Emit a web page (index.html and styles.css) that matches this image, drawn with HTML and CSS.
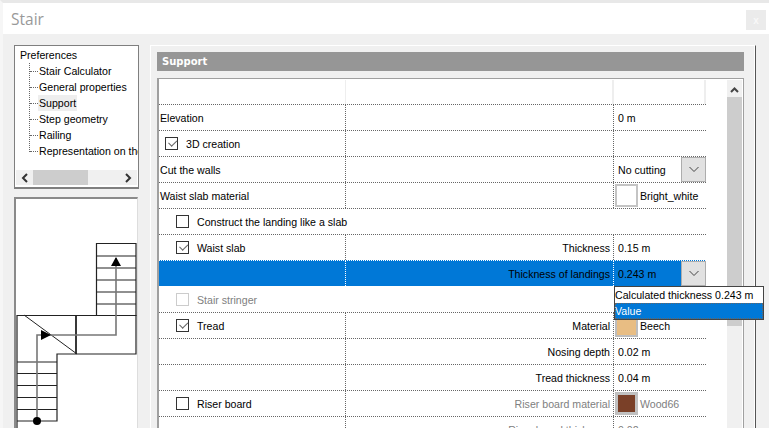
FILE: index.html
```html
<!DOCTYPE html>
<html lang="en">
<head>
<meta charset="utf-8">
<title>Stair</title>
<link rel="stylesheet" href="styles.css">
</head>
<body>
<div class="window">
  <header class="titlebar">
    <h1 class="title">Stair</h1>
    <button class="close">x</button>
  </header>
  <main class="content">
    <aside class="side">
      <nav class="tree">
        <div class="tree-root">Preferences</div>
        <ul class="tree-list">
          <li class="tree-item"><span class="tree-label">Stair Calculator</span></li>
          <li class="tree-item"><span class="tree-label">General properties</span></li>
          <li class="tree-item"><span class="tree-label current">Support</span></li>
          <li class="tree-item"><span class="tree-label">Step geometry</span></li>
          <li class="tree-item"><span class="tree-label">Railing</span></li>
          <li class="tree-item"><span class="tree-label">Representation on the plan</span></li>
        </ul>
        <div class="hscroll">
          <svg class="arrow" width="8" height="10" viewBox="0 0 8 10"><path d="M6 1 2 5l4 4" fill="none" stroke="#333" stroke-width="2"/></svg>
          <div class="hscroll-track"><div class="hscroll-thumb"></div></div>
          <svg class="arrow" width="8" height="10" viewBox="0 0 8 10"><path d="M2 1l4 4-4 4" fill="none" stroke="#333" stroke-width="2"/></svg>
        </div>
      </nav>
      <div class="preview">
        <svg class="plan" width="122" height="229" viewBox="16 199 122 229">
          <g fill="none" stroke="#222" stroke-width="1.2">
            <path d="M96.500 316V243.500H136V316"/>
            <path d="M96.500 256H136M96.500 268H136M96.500 280H136M96.500 292H136M96.500 304H136"/>
            <path d="M17 428V315.500H136V354H57V421H17"/>
            <path d="M17 362H57M17 373.500H57M17 385.500H57M17 397.500H57M17 409.500H57"/>
            <path d="M76 315V354" stroke-width="1.8"/>
            <path d="M24 315 77 354" stroke-width="1"/>
          </g>
          <path d="M116 258V335H37V421" fill="none" stroke="#777" stroke-width="1.6"/>
          <path d="M116 257l5 9H111z"/>
          <path d="M41 330l10 5-10 5z"/>
          <circle cx="37" cy="421" r="4"/>
        </svg>
      </div>
    </aside>
    <section class="group">
      <h2 class="group-head">Support</h2>
      <div class="panel">
        <div class="rows">
          <div class="row row-head"><div></div><div></div><div></div></div>
          <div class="row"><div class="cell">Elevation</div><div class="cell"></div><div class="cell val">0 m</div></div>
          <div class="row"><div class="cell check-1"><span class="box on"></span>3D creation</div><div class="cell"></div><div class="cell val"></div></div>
          <div class="row"><div class="cell">Cut the walls</div><div class="cell"></div><div class="cell val combo">No cutting<span class="drop"><svg width="12" height="7" viewBox="0 0 12 7"><path d="M1.500 1 6 5.500 10.500 1" fill="none" stroke="#444"/></svg></span></div></div>
          <div class="row"><div class="cell">Waist slab material</div><div class="cell"></div><div class="cell mat"><span class="swatch white"></span>Bright_white</div></div>
          <div class="row row-open"><div class="cell check-2"><span class="box"></span>Construct the landing like a slab</div></div>
          <div class="row"><div class="cell check-2"><span class="box on"></span>Waist slab</div><div class="cell right">Thickness</div><div class="cell val">0.15 m</div></div>
          <div class="row selected"><div class="cell"></div><div class="cell right">Thickness of landings</div><div class="cell val combo">0.243 m<span class="drop"><svg width="12" height="7" viewBox="0 0 12 7"><path d="M1.500 1 6 5.500 10.500 1" fill="none" stroke="#444"/></svg></span>
            <div class="menu"><div class="menu-item">Calculated thickness 0.243 m</div><div class="menu-item active">Value</div></div></div></div>
          <div class="row row-open"><div class="cell check-2 muted"><span class="box off"></span>Stair stringer</div></div>
          <div class="row"><div class="cell check-2"><span class="box on"></span>Tread</div><div class="cell right">Material</div><div class="cell mat"><span class="swatch beech"></span>Beech</div></div>
          <div class="row"><div class="cell"></div><div class="cell right">Nosing depth</div><div class="cell val">0.02 m</div></div>
          <div class="row"><div class="cell"></div><div class="cell right">Tread thickness</div><div class="cell val">0.04 m</div></div>
          <div class="row"><div class="cell check-2"><span class="box"></span>Riser board</div><div class="cell right muted">Riser board material</div><div class="cell mat muted"><span class="swatch wood"></span>Wood66</div></div>
          <div class="row"><div class="cell"></div><div class="cell right muted">Riser board thickness</div><div class="cell val muted">0.02 m</div></div>
        </div>
        <div class="vscroll">
          <svg class="up" width="9" height="6" viewBox="0 0 9 6"><path d="M1 5l3.500-3.500L8 5" fill="none" stroke="#444" stroke-width="2"/></svg>
          <div class="vthumb"></div>
        </div>
      </div>
    </section>
  </main>
</div>
</body>
</html>
```
FILE: styles.css
```css
* { box-sizing: border-box; }
html, body { margin: 0; height: 100%; overflow: hidden; }
body { font: 10.6px/1 "Liberation Sans", Arial, sans-serif; color: #000; background: #f0f0f0; }
.window { width: 769px; height: 428px; overflow: hidden; display: flex; flex-direction: column; border-top: 3px solid #e8e8e8; border-left: 3px solid #f6f6f6; }
.titlebar { height: 31px; background: #fff; display: flex; align-items: center; justify-content: space-between; padding: 0 3px 0 8px; flex: none; }
.title { margin: 0; font: 400 15.5px "Open Sans", sans-serif; color: #999; }
.close { width: 20px; height: 20px; padding: 0; border: 0; background: #ebebeb; color: #f8f8f8; font: 700 10px "Liberation Sans", sans-serif; margin-top: 3px; }
.content { flex: 1; display: flex; gap: 11px; padding: 11px 0 0 11px; min-height: 0; }
.side { width: 125px; flex: none; display: flex; flex-direction: column; gap: 8px; }
.tree { position: relative; height: 144px; flex: none; border: 1px solid #7f7f7f; border-width: 1px 1px 2px 1px; background: #fff; padding: 1px 0 0 5px; overflow: hidden; }
.tree-root { height: 16px; line-height: 16px; }
.tree-list { list-style: none; margin: 0 0 0 9px; padding: 0; white-space: nowrap; border-left: 1px dotted #666; height: 89px; }
.tree-item { height: 16px; display: flex; align-items: center; }
.tree-item::before { content: ""; width: 8px; border-top: 1px dotted #666; flex: none; }
.tree-label { padding: 2px 1px; line-height: 12px; }
.current { background: #eee; }
.hscroll { position: absolute; left: 1px; right: 1px; bottom: 2px; height: 15px; background: #f0f0f0; display: flex; align-items: center; justify-content: space-between; padding: 0 5px; }
.hscroll-track { flex: 1; height: 15px; padding-left: 4px; }
.hscroll-thumb { width: 55px; height: 15px; background: #cdcdcd; }
.arrow { flex: none; }
.preview { flex: 1; border-top: 2px solid #8a8a8a; border-left: 2px solid #8a8a8a; border-right: 1px solid #ddd; background: #fff; overflow: hidden; margin-right: 1px; }
.plan { display: block; }
.group { width: 606px; flex: none; padding: 6px 11px 0 6px; border-top: 1px solid #fff; border-left: 1px solid #fff; border-right: 1px solid #555; box-shadow: inset -1px 0 #fff; }
.group-head { margin: 0; height: 19px; padding: 1px 0 0 5px; background: #969696; color: #fff; font: 700 10px/18px "DejaVu Sans", sans-serif; }
.panel { position: relative; margin-top: 7px; height: 360px; background: #fff; border: 1px solid #a0a0a0; border-width: 1px 1px 0 2px; padding: 1px 0 0 0; display: flex; }
.rows { width: 547px; flex: none; }
.row { display: grid; grid-template-columns: 187px 268px 92px; height: 26px; border-bottom: 1px dotted #666; }
.row-head { height: 25px; }
.row-head > div { border-right: 2px solid #eee; }
.row-head > div:first-child { border-right-width: 1px; }
.cell { display: flex; align-items: center; padding: 1px 0 0 1px; border-right: 1px dotted #666; white-space: nowrap; position: relative; }
.row-open { display: block; }
.row-open .cell { border-right: 0; height: 100%; }
.right { justify-content: flex-end; padding-right: 3px; }
.val { padding-left: 4px; border-right: 0; }
.mat { padding-left: 1px; border-right: 0; }
.check-1 { padding-left: 6px; }
.check-2 { padding-left: 17px; }
.box { position: relative; width: 13px; height: 13px; border: 1px solid #333; margin: -1px 8px 0 0; flex: none; background: #fff; }
.box.on::after { content: ""; position: absolute; left: 2px; top: 1px; width: 7px; height: 4px; border-left: 1.500px solid #666; border-bottom: 1.500px solid #666; transform: rotate(-45deg) translate(0, 1px); }
.box.off { border-color: #ccc; }
.muted { color: #808080; }
.combo { justify-content: space-between; padding-right: 0; }
.drop { width: 25px; height: 25px; margin-top: -1px; background: #e1e1e1; border: 1px solid #adadad; display: flex; align-items: center; justify-content: center; flex: none; }
.swatch { width: 23px; height: 23px; border: 2px solid #bdbdbd; margin: -1px 2px 0 0; flex: none; background: #fff; }
.swatch.white { border-color: #c4c4c4; }
.swatch.beech { background: #e8bd83; }
.swatch.wood { background: #7a4028; border: 3px solid #c0c0c0; }
.row.selected { background: #0078d7; border-top: 1px dotted #fff; margin-top: -1px; height: 27px; border-bottom: 1px solid #fff; }
.selected .cell { border-right-color: #fff; }
.menu { position: absolute; left: 0; top: 25px; width: 150px; height: 34px; background: #fff; border: 1px solid #444; z-index: 2; }
.menu-item { height: 16px; line-height: 16px; }
.menu-item.active { background: #0078d7; color: #fff; outline: 1px dotted #666; outline-offset: -1px; height: 16px; }
.vscroll { position: absolute; left: 568px; top: 1px; width: 15px; height: 100%; background: #f0f0f0; display: flex; flex-direction: column; align-items: center; }
.up { margin: 7px 0 4px; flex: none; }
.vthumb { width: 100%; height: 229px; background: #cdcdcd; flex: none; }
```
